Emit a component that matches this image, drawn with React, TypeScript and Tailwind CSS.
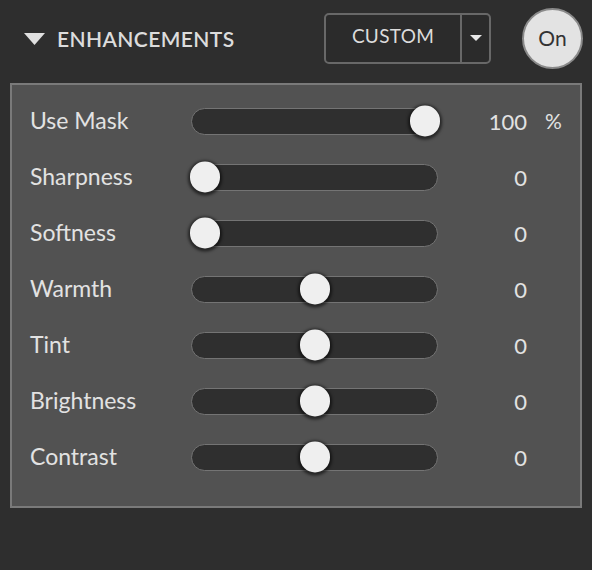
import React from "react";

const rows = [
  { label: "Use Mask", value: 100, display: "100", unit: "%" },
  { label: "Sharpness", value: 0, display: "0" },
  { label: "Softness", value: 0, display: "0" },
  { label: "Warmth", value: 50, display: "0" },
  { label: "Tint", value: 50, display: "0" },
  { label: "Brightness", value: 50, display: "0" },
  { label: "Contrast", value: 50, display: "0" },
];

function Slider({ value }: { value: number }) {
  return (
    <div className="relative w-[247px] h-[27px] rounded-full bg-[#2f2f2f] border border-[#747474]">
      <div
        className="absolute top-1/2 w-[30px] h-[31px] rounded-full bg-[#efefef] shadow-[0_1px_3px_2px_rgba(0,0,0,0.55)]"
        style={{ left: `${-2 + (value / 100) * 220}px`, transform: "translateY(-50%)" }}
      />
    </div>
  );
}

export default function App() {
  return (
    <div className="w-[592px] h-[570px] bg-[#2e2e2e] font-['Lato','Open_Sans',sans-serif] text-[#dcdcdc] pt-[8px]">
      {/* header */}
      <div className="flex items-center h-[61px] pl-[24px] pr-[10px]">
        <svg width="21" height="12" viewBox="0 0 21 12" className="mr-[12px]">
          <polygon points="0,0 21,0 10.5,12" fill="#e0e0e0" />
        </svg>
        <span className="text-[21px] font-semibold tracking-[0.4px]">ENHANCEMENTS</span>
        <div className="ml-auto flex h-[51px] w-[167px] rounded-[5px] border-2 border-[#686868] bg-[#2b2b2b] mr-[31px] mt-[-1px]">
          <div className="flex-1 flex items-center justify-center text-[19px] pb-[4px] tracking-[0.3px]">CUSTOM</div>
          <div className="w-[2px] bg-[#686868]" />
          <div className="w-[27px] flex items-center justify-center">
            <svg width="12" height="6" viewBox="0 0 12 6">
              <polygon points="0,0 12,0 6,6" fill="#e8e8e8" />
            </svg>
          </div>
        </div>
        <div className="w-[61px] h-[61px] rounded-full bg-[#e3e3e3] border-2 border-[#8a8a8a] flex items-center justify-center text-[#333] text-[21px] mr-[-1px] pb-[1px]">
          On
        </div>
      </div>

      {/* panel */}
      <div className="mx-[10px] mt-[14px] h-[425px] bg-[#525252] border-2 border-[#7a7a7a] pt-[8px]">
        {rows.map((r) => (
          <div key={r.label} className="flex items-center h-[56px]">
            <div className="w-[179px] pl-[18px] text-[23px] text-[#e2e2e2] pb-[1px]">{r.label}</div>
            <Slider value={r.value} />
            <div className="w-[89px] text-right text-[22px] text-[#e2e2e2]">{r.display}</div>
            {r.unit && <div className="ml-[18px] text-[21px] text-[#e2e2e2]">{r.unit}</div>}
          </div>
        ))}
      </div>
    </div>
  );
}
